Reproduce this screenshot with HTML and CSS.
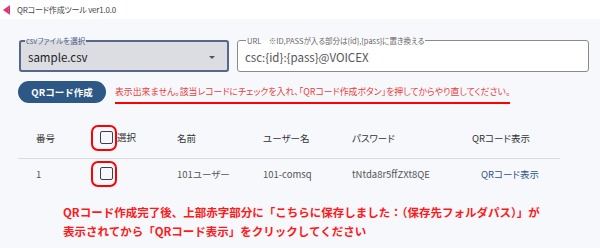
FILE: index.html
```html
<!DOCTYPE html>
<html lang="ja">
<head>
  <meta charset="UTF-8" />
  <title>QRコード作成ツール</title>
  <link rel="stylesheet" href="styles.css">
</head>
<body>
  <div class="titlebar">
    <svg class="app-icon" width="8" height="10" viewBox="0 0 8 10">
      <polygon points="7,0 0,5 7,10 5,5" fill="#e8336b"/>
      <polygon points="7,0 5,5 7,10" fill="#c42a7a"/>
    </svg>
    <span>QRコード作成ツール ver1.0.0</span>
  </div>

  <main class="page">
    <div class="fields">
      <fieldset class="field field-select">
        <legend>csvファイルを選択</legend>
        <div class="field-row">
          <span class="value">sample.csv</span>
          <span class="caret"></span>
        </div>
      </fieldset>
      <fieldset class="field field-url">
        <legend>URL　※ID,PASSが入る部分は{id},{pass}に置き換える</legend>
        <div class="field-row">
          <span class="value">csc:{id}:{pass}@VOICEX</span>
        </div>
      </fieldset>
    </div>

    <div class="actions">
      <button type="button" class="btn">QRコード作成</button>
      <p class="error">表示出来ません。該当レコードにチェックを入れ、「QRコード作成ボタン」を押してからやり直してください。</p>
    </div>

    <table class="records">
      <colgroup>
        <col style="width:74px"><col style="width:85px"><col style="width:86px">
        <col style="width:89px"><col style="width:120px"><col style="width:88px">
      </colgroup>
      <thead>
        <tr>
          <th class="num">番号</th>
          <th><span class="ring"><span class="check"></span></span>選択</th>
          <th>名前</th>
          <th>ユーザー名</th>
          <th>パスワード</th>
          <th>QRコード表示</th>
        </tr>
      </thead>
      <tbody>
        <tr>
          <td class="num">1</td>
          <td><span class="ring"><span class="check"></span></span></td>
          <td>101ユーザー</td>
          <td>101-comsq</td>
          <td>tNtda8r5ffZXt8QE</td>
          <td><a class="qr-link">QRコード表示</a></td>
        </tr>
      </tbody>
    </table>

    <p class="note">QRコード作成完了後、上部赤字部分に「こちらに保存しました：（保存先フォルダパス）」が<br>表示されてから「QRコード表示」をクリックしてください</p>
  </main>
</body>
</html>
```

FILE: styles.css
```css
* { box-sizing: border-box; }
html, body { margin: 0; height: 100%; }
body {
  font-family: "Noto Sans CJK JP", "Noto Sans", sans-serif;
  font-feature-settings: "palt";
  background-color: #f7f8fc; color: #333;
}

.titlebar {
  display: flex; align-items: center; gap: 6px;
  height: 19px; padding-left: 3px; background-color: #fff;
  font-size: 8px; color: #444; letter-spacing: -0.2px;
}

.page { padding: 17px 11px 0 18px; }

.fields { display: flex; gap: 8px; }
.field {
  margin: 0; padding: 4px 7px 5px; border-radius: 3px; min-width: 0;
}
.field legend {
  font-size: 7.5px; line-height: 9px; padding: 0 1px; color: #666;
}
.field-select {
  width: 210px; margin-left: 1px; background-color: #dcdde3;
  border: 2px solid #55678a;
}
.field-select legend { margin-left: -3px; color: #4c5f86; }
.field-url { flex: 1; background-color: #fff; border: 1px solid #8a8a8a; }
.field-url legend { margin-left: 1px; }
.field-row { display: flex; align-items: center; justify-content: space-between; height: 16px; }
.value { font-size: 11.5px; line-height: 16px; }
.field-select .value { color: #222; }
.field-url .value { color: #555; }
.caret {
  width: 0; height: 0; margin-right: 5px;
  border-left: 3px solid transparent; border-right: 3px solid transparent;
  border-top: 3px solid #555;
}

.actions { display: flex; align-items: flex-start; gap: 9px; margin-top: 9px; }
.btn {
  width: 88px; height: 22px; border: none; border-radius: 11px;
  background-color: #2d5784; color: #fff;
  font-family: inherit; font-size: 9.5px; font-weight: 700; cursor: pointer;
}
.error {
  margin: 5px 0 0; padding-bottom: 4px; line-height: 12px;
  font-size: 8.9px; color: #e8403c; border-bottom: 2px solid #ff0000;
}

.records {
  width: 542px; margin-top: 15px; border-collapse: collapse; table-layout: fixed;
  font-size: 9.5px; text-align: left;
}
.records th { height: 39px; padding: 0; font-weight: 400; color: #333; border-bottom: 1px solid #d9dce3; }
.records td { height: 32px; padding: 0; color: #555; }
.records .num { padding-left: 18px; }
.ring {
  display: inline-flex; vertical-align: middle; margin-left: -1px;
  padding: 4px 2px 5px 7px; border: 2px solid #ff0000; border-radius: 7px;
}
.check {
  width: 13px; height: 13px; border: 1.5px solid #3b404a; border-radius: 2px;
}
.qr-link { margin-left: 9px; color: #2d5784; cursor: pointer; }

.note {
  margin: 13px 0 0; padding-left: 45px;
  font-size: 11.5px; line-height: 19px; font-weight: 700; color: #ff1a1a;
  font-feature-settings: normal;
}
```
